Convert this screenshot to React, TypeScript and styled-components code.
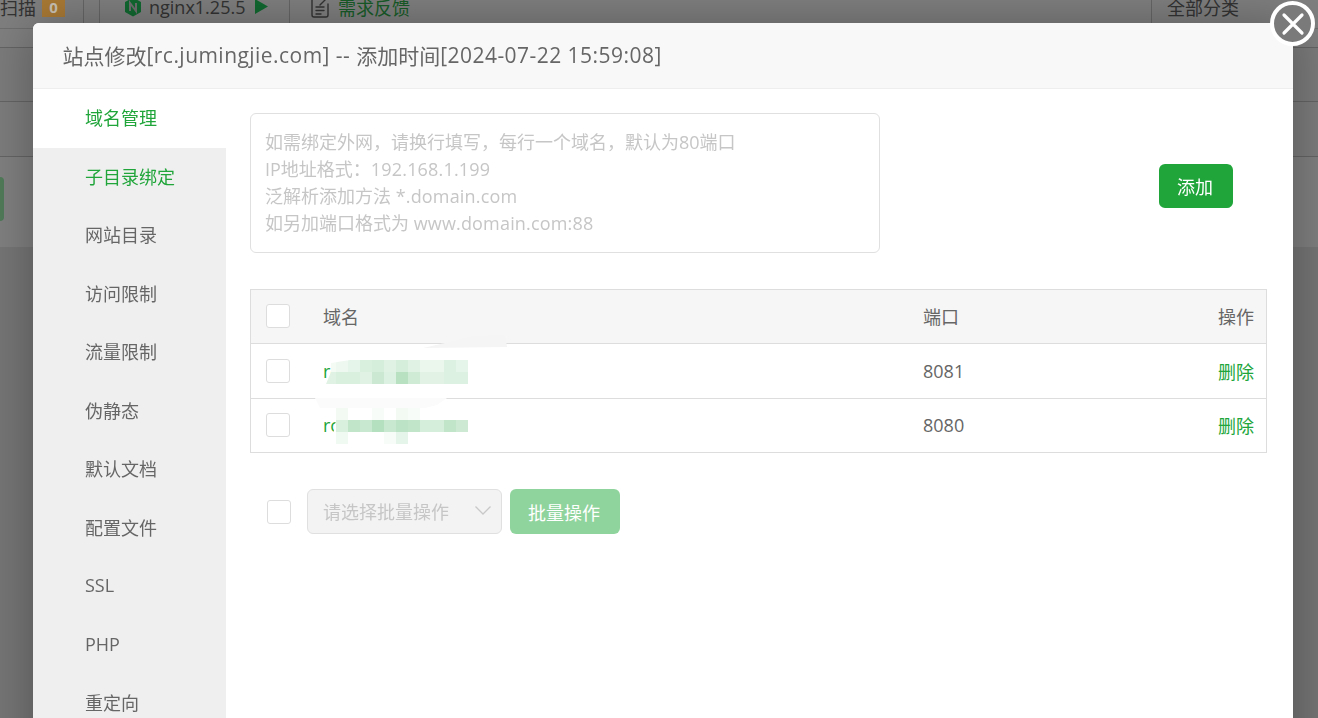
import React from "react";
import styled, { createGlobalStyle } from "styled-components";

const FONT = `"Open Sans", "Noto Sans CJK SC", sans-serif`;
const Global = createGlobalStyle`
  html, body { margin: 0; padding: 0; height: 100%; overflow: hidden; background: #fff; font-family: ${FONT}; }
  * { box-sizing: border-box; }
`;

const Page = styled.div`
  width: 1318px; height: 718px; overflow: hidden; background: #ebebeb;
`;
const TopBar = styled.div`
  height: 44px; margin-top: -15px; background: #fff; border-bottom: 1px solid #ddd;
  display: flex; align-items: center; font-size: 18px; color: #666;
`;
const BarItem = styled.div<{ $w: number; $plain?: boolean; $pad?: number }>`
  width: ${p => p.$w}px; height: 100%; display: flex; align-items: center; gap: 6px;
  padding-left: ${p => p.$pad ?? 0}px;
  border-right: ${p => (p.$plain ? "0" : "1px solid #ccc")}; white-space: nowrap; flex: none;
`;
const RightItem = styled.div`
  width: 167px; height: 100%; display: flex; align-items: center; padding-left: 15px;
  border-left: 1px solid #ccc; white-space: nowrap; flex: none;
`;
const Count = styled.span`
  position: relative; z-index: 1;
  width: 23px; height: 20px; background: #a97a35; color: #c9c2b4; font-size: 15px; font-weight: 700;
  display: inline-flex; align-items: center; justify-content: center;
`;
const Spacer = styled.div`flex: 1;`;
const Green = styled.span`color: #20a53a;`;
const BarGreen = styled.span`color: #30b850; margin-left: 2px;`;
const Version = styled.span`margin-left: 1px;`;
const Play = styled.svg`margin-left: 4px; flex: none;`;
const NavStrip = styled.div`height: 19px; background: #fff; border-bottom: 1px solid #c8c8c8;`;
const Crumbs = styled.div`height: 54px; background: #f6f6f6; border-bottom: 1px solid #c8c8c8;`;
const Band = styled.div`height: 55px; background: #f8f8f8; border-bottom: 1px solid #c8c8c8;`;
const Actions = styled.div`height: 90px; background: #fff; display: flex; align-items: flex-start; padding-top: 20px;`;
const LeftBtn = styled.div`position: relative; z-index: 1; width: 4px; height: 44px; background: #4f7a58; border-radius: 0 4px 4px 0;`;

const Shade = styled.div`position: fixed; inset: 0; background: rgba(0,0,0,.5);`;
const Modal = styled.div`
  position: fixed; z-index: 2; left: 33px; top: 23px; width: 1260px; height: 760px; background: #fff;
  border-radius: 6px 6px 0 0; box-shadow: 1px 1px 50px rgba(0,0,0,.3); color: #666;
`;
const Title = styled.div`
  height: 66px; padding: 0 0 2px 29.5px; display: flex; align-items: center; background: #f8f8f8;
  border-bottom: 1px solid #eee; border-radius: 6px 6px 0 0; font-size: 21px; color: #666; white-space: pre;
`;
const TitleLatin = styled.span`letter-spacing: .46px;`;
const Close = styled.button`
  position: absolute; right: -22px; top: -22px; width: 45px; height: 45px; border-radius: 50%; padding: 0;
  border: 4px solid #fff; background: #7a7a7a; display: flex; align-items: center; justify-content: center;
`;
const Body = styled.div`display: flex; height: 694px;`;
const Side = styled.div`width: 193px; background: #efefef; flex: none;`;
const SideItem = styled.div<{ $state?: "on" | "green" }>`
  height: 58.5px; padding: 0 0 2px 52px; display: flex; align-items: center; font-size: 18px;
  color: ${p => (p.$state ? "#20a53a" : "#666")};
  background: ${p => (p.$state === "on" ? "#fff" : "transparent")};
`;
const Main = styled.div`flex: 1; padding: 24px 26px 0 24px; min-width: 0;`;
const AddRow = styled.div`display: flex; align-items: center; justify-content: space-between; padding-right: 34px;`;
const Area = styled.div`
  width: 630px; height: 140px; border: 1px solid #e0e0e0; border-radius: 6px; padding: 15px 14px;
  font-size: 18px; line-height: 27px; color: #c6c6c6;
`;
const AreaLatin = styled.span`letter-spacing: .17px;`;
const Primary = styled.button<{ $off?: boolean }>`
  border: 0; border-radius: 6px; padding: 0 2px 0 0; color: #fff; font: 400 18px ${FONT};
  background: ${p => (p.$off ? "#90d49d" : "#20a53a")};
  display: flex; align-items: center; justify-content: center;
`;
const AddBtn = styled(Primary)`width: 74px; height: 44px; margin-top: 6px;`;
const Table = styled.div`position: relative; margin-top: 36px; border: 1px solid #ddd; font-size: 18px;`;
const Row = styled.div<{ $head?: boolean }>`
  display: grid; grid-template-columns: 72px 600px 1fr 90px; align-items: center;
  padding: 0 12px ${p => (p.$head ? "2px" : "0")} 0;
  height: ${p => (p.$head ? "53px" : "54.5px")};
  background: ${p => (p.$head ? "#f6f6f6" : "#fff")};
  & + & { border-top: 1px solid #ddd; }
`;
const CheckCell = styled.div`padding-left: 15px; display: flex;`;
const Check = styled.span`
  display: block; width: 24px; height: 24px; background: #fff; border: 1px solid #ddd; border-radius: 3px;
`;
const End = styled.div`text-align: right;`;
const Domain = styled.div`color: #20a53a;`;
const Blur = styled.div<{ $top: number; $clip: string }>`
  position: absolute; left: 75px; top: ${p => p.$top}px; display: grid;
  grid-template-columns: 10px repeat(11, 12px); grid-auto-rows: 12px;
  clip-path: ${p => p.$clip};
`;
const Pixel = styled.i`display: block;`;
const HeadSmear = styled.div`
  position: absolute; left: 172px; top: 45px; width: 84px; height: 13px; background: #f5f5f5;
  clip-path: polygon(0 100%, 22px 8px, 50px 1px, 82px 0, 100% 12px);
`;
const RowSmear = styled.div`
  position: absolute; left: 64px; top: 108px; width: 132px; height: 10px; background: #fbfbfb;
  clip-path: polygon(0 0, 100% 0, 122px 7px, 110px 100%, 5px 100%);
`;
const Batch = styled.div`margin-top: 36px; display: flex; align-items: center; padding-left: 17px;`;
const BatchCheck = styled(Check)`margin-right: 16px;`;
const Select = styled.div`
  width: 195px; height: 45px; background: #f3f3f3; border: 1px solid #e0e0e0; border-radius: 6px;
  display: flex; align-items: center; justify-content: space-between; padding: 0 10px 2px 15px; color: #c6c6c6; font-size: 18px;
`;
const BatchBtn = styled(Primary)`width: 110px; height: 45px; margin-left: 8px;`;

const side = ["域名管理", "子目录绑定", "网站目录", "访问限制", "流量限制", "伪静态", "默认文档", "配置文件", "SSL", "PHP", "重定向"];
const blurA = [
  "#f4fbf5", "#eef8f0", "#e6f5e9", "#daf0df", "#d5eedb", "#e0f2e4", "#d5eedb", "#e0f2e4", "#ebf7ed", "#ebf7ed", "#dcf1e1", "#e6f5e9",
  "#e0f2e4", "#daf0df", "#daf0df", "#e0f2e4", "#cbe9d2", "#dcf1e1", "#b8e1c2", "#cfebd6", "#e2f3e5", "#e2f3e5", "#dcf1e1", "#dcf1e1",
];
const blurB = [
  "#fff", "#f3faf4", "#fff", "#fff", "#f7fcf8", "#fff", "#f3faf4", "#f7fcf8", "#fff", "#fff", "#fff", "#fff",
  "#fff", "#daf0df", "#c0e5c9", "#c8e8cf", "#b5e0bf", "#c8e8cf", "#bde3c6", "#c0e5c9", "#d5eedb", "#d5eedb", "#c0e5c9", "#cde9d3",
  "#fff", "#f0f9f2", "#fff", "#fff", "#fff", "#f7fcf8", "#e6f5e9", "#fff", "#fff", "#fff", "#fff", "#fff",
];

export default function App() {
  return (
    <Page>
      <Global />
      <TopBar>
        <BarItem $w={84}>扫描 <Count>0</Count></BarItem>
        <BarItem $w={16} />
        <BarItem $w={190} $pad={24}>
          <svg width="18" height="20" viewBox="0 0 18 20"><path d="M9 .5l8 4.6v9.8l-8 4.6-8-4.6V5.100z" fill="#22d060" /><path d="M6 14V6l6 8V6" fill="none" stroke="#ddd" strokeWidth="2" /></svg>
          <Version>nginx1.25.5</Version>
          <Play width="13" height="15" viewBox="0 0 13 15"><path d="M0 0l13 7.500-13 7.500z" fill="#22d060" /></Play>
        </BarItem>
        <BarItem $w={300} $plain $pad={21}>
          <svg width="19" height="22" viewBox="0 0 19 22" fill="none" stroke="#666" strokeWidth="1.4" strokeLinecap="round">
            <path d="M9 2H3a2 2 0 0 0-2 2v15a2 2 0 0 0 2 2h12a2 2 0 0 0 2-2V8" />
            <path d="M5 11h8M5 14.500h8M5 18h5M9 9l8-8" />
          </svg>
          <BarGreen>需求反馈</BarGreen>
        </BarItem>
        <Spacer />
        <RightItem>全部分类</RightItem>
      </TopBar>
      <NavStrip />
      <Crumbs />
      <Band />
      <Actions><LeftBtn /></Actions>
      <Shade />
      <Modal>
        <Title>站点修改<TitleLatin>[rc.jumingjie.com] -- </TitleLatin>添加时间<TitleLatin>[2024-07-22 15:59:08]</TitleLatin></Title>
        <Close aria-label="关闭">
          <svg width="26" height="26" viewBox="0 0 26 26"><path d="M4 4l18 18M22 4L4 22" stroke="#fff" strokeWidth="3.2" strokeLinecap="round" /></svg>
        </Close>
        <Body>
          <Side>
            {side.map((s, i) => <SideItem key={s} $state={i === 0 ? "on" : i === 1 ? "green" : undefined}>{s}</SideItem>)}
          </Side>
          <Main>
            <AddRow>
              <Area>
                如需绑定外网，请换行填写，每行一个域名，默认为80端口<br />
                IP地址格式：<AreaLatin>192.168.1.199</AreaLatin><br />
                泛解析添加方法 <AreaLatin>*.domain.com</AreaLatin><br />
                如另加端口格式为 <AreaLatin>www.domain.com:88</AreaLatin>
              </Area>
              <AddBtn>添加</AddBtn>
            </AddRow>
            <Table>
              <Row $head><CheckCell><Check /></CheckCell><div>域名</div><div>端口</div><End>操作</End></Row>
              <Row>
                <CheckCell><Check /></CheckCell>
                <Domain>rc.jumingjie.com</Domain>
                <div>8081</div><End><Green>删除</Green></End>
              </Row>
              <Row>
                <CheckCell><Check /></CheckCell>
                <Domain>rc.jumingjie.com</Domain>
                <div>8080</div><End><Green>删除</Green></End>
              </Row>
              <Blur $top={70} $clip="polygon(5px 3px, 24px 0, 100% 0, 100% 100%, 0 100%, 5px 12px)">
                {blurA.map((c, i) => <Pixel key={i} style={{ background: c }} />)}
              </Blur>
              <Blur $top={118} $clip="polygon(10px 0, 100% 0, 100% 100%, 5px 100%, 10px 12px)">
                {blurB.map((c, i) => <Pixel key={i} style={{ background: c }} />)}
              </Blur>
              <HeadSmear />
              <RowSmear />
            </Table>
            <Batch>
              <BatchCheck />
              <Select>请选择批量操作
                <svg width="16" height="9" viewBox="0 0 16 9" fill="none" stroke="#c8c8c8" strokeWidth="1.3"><path d="M.5.500L8 8l7.500-7.500" /></svg>
              </Select>
              <BatchBtn $off>批量操作</BatchBtn>
            </Batch>
          </Main>
        </Body>
      </Modal>
    </Page>
  );
}
